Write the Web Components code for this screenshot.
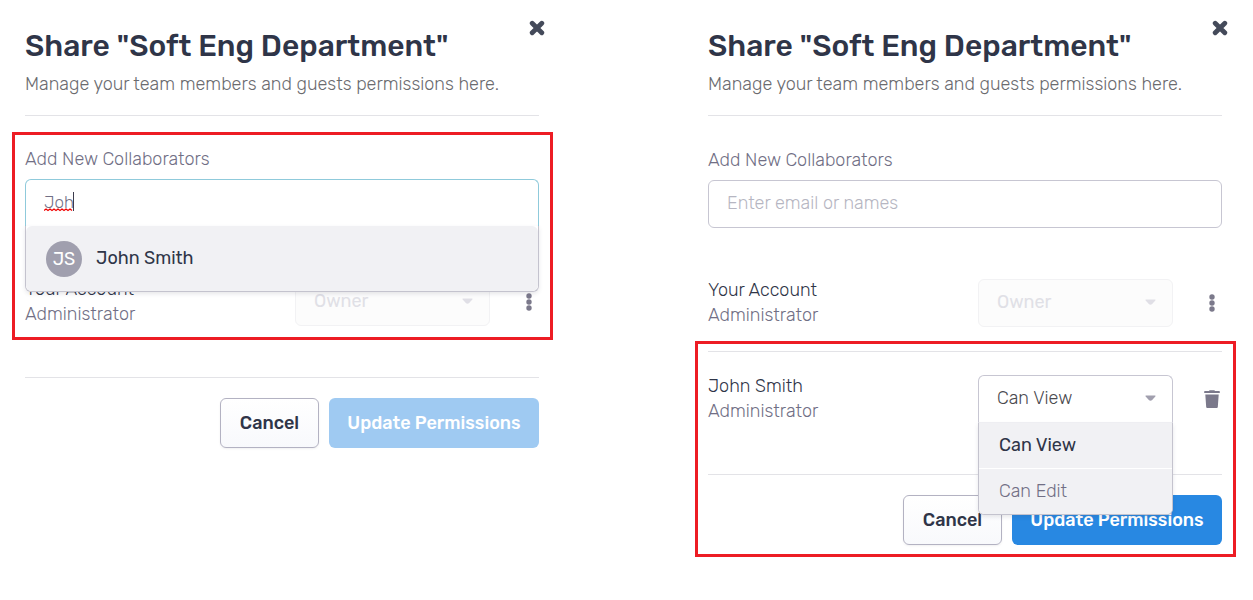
<!DOCTYPE html>
<html lang="en">
<head>
<meta charset="utf-8">
<meta name="viewport" content="width=device-width, initial-scale=1">
<title>Share "Soft Eng Department"</title>
<style>
  body { margin: 0; background: #fff; font-family: Rubik, Roboto, sans-serif; font-size: 18px; font-weight: 365; line-height: 25px; color: #2f3548; }
  main { display: grid; grid-template-columns: minmax(0, 1fr) minmax(0, 1fr); column-gap: 169px; padding: 16px 31px 43px 25px; align-items: start; }
  section { padding: 4px 0 12px; }
</style>
</head>
<body>
<main>
  <share-dialog heading='Share "Soft Eng Department"' pending>
    <highlight-frame>
      <collaborator-field value="Joh" match="John Smith" initials="JS"></collaborator-field>
      <member-row name="Your Account" role-name="Administrator" access="Owner" locked></member-row>
    </highlight-frame>
  </share-dialog>
  <share-dialog heading='Share "Soft Eng Department"'>
    <section>
      <collaborator-field></collaborator-field>
      <member-row name="Your Account" role-name="Administrator" access="Owner" locked></member-row>
    </section>
    <highlight-frame slot="last">
      <member-row name="John Smith" role-name="Administrator" access="Can View" divided open></member-row>
      <dialog-actions></dialog-actions>
    </highlight-frame>
  </share-dialog>
</main>
<script>
const attr = (el, n) => (el.getAttribute(n) || '').replace(/&/g, '&amp;').replace(/"/g, '&quot;').replace(/</g, '&lt;');
const render = (el, html) => { el.attachShadow({ mode: 'open' }).innerHTML = html; };

customElements.define('highlight-frame', class extends HTMLElement {
  connectedCallback() {
    render(this, `
      <style>:host { display: block; margin: 0 -14px 0 -13px; border: 3px solid #ed1c24; padding: 0 11px 9px 10px; }</style>
      <slot></slot>`);
  }
});

customElements.define('share-dialog', class extends HTMLElement {
  connectedCallback() {
    const pending = this.hasAttribute('pending');
    render(this, `
      <style>
        :host { display: block; }
        header { display: grid; grid-template-columns: 1fr auto; padding-bottom: 18px; border-bottom: 1px solid #e3e3e7; margin-bottom: 16px; }
        h2 { margin: 10px 0 0; font-size: 30px; line-height: 40px; font-weight: 500; white-space: nowrap; }
        p { grid-column: 1 / -1; margin: 6px 0 0; color: #6b6b6f; font-weight: 300; }
        button { width: 24px; height: 24px; margin-right: -10px; padding: 0; border: 0; background: none; display: grid; place-items: center; color: #444a5a; }
        dialog-actions { margin-top: 37px; }
      </style>
      <header>
        <h2>${attr(this, 'heading')}</h2>
        <button type="button" aria-label="Close">
          <svg width="16" height="16" viewBox="0 0 16 16"><path d="M3.2 3.2 12.8 12.8M12.8 3.2 3.2 12.8" stroke="currentColor" stroke-width="4.8" stroke-linecap="round"/></svg>
        </button>
        <p>Manage your team members and guests permissions here.</p>
      </header>
      <slot></slot>
      ${pending ? '<dialog-actions disabled></dialog-actions>' : ''}
      <slot name="last"></slot>`);
  }
});

customElements.define('collaborator-field', class extends HTMLElement {
  connectedCallback() {
    const value = attr(this, 'value');
    render(this, `
      <style>
        :host { display: block; position: relative; z-index: 2; padding-top: 12px; }
        label { display: block; color: #716f85; margin-bottom: 7px; }
        .box { position: relative; }
        input { box-sizing: border-box; display: block; width: 100%; height: 48px; padding: 0 18px 2px; border: 1px solid #c7c6d2; border-radius: 6px; background: #fff; color: #716f85; font: inherit; outline: 0; }
        input::placeholder { color: #b6b6c2; opacity: 1; }
        .active { border-color: #8fcadb #8fcadb #fff; border-radius: 6px 6px 0 0; font-size: 17px; }
        .typing { position: absolute; left: 19px; top: 12px; }
        .menu { position: absolute; top: 47px; left: 0; right: 0; border: 1px solid #c4c3ce; border-top: 0; border-radius: 0 0 6px 6px; background: #fff; box-shadow: 0 2px 4px rgba(60, 60, 80, .12); }
        button { width: 100%; height: 65px; display: flex; align-items: center; gap: 14px; padding: 0 20px; border: 0; border-radius: 6px; background: #f1f1f4; color: #2f3548; font: inherit; font-weight: 450; text-align: left; }
        .avatar { width: 36px; height: 36px; line-height: 36px; border-radius: 50%; background: #a09fae; color: #fff; text-align: center; font-weight: 400; }
      </style>
      <label for="people">Add New Collaborators</label>
      <div class="box">
        <input id="people" type="text" placeholder="Enter email or names" value="${value}" class="${value ? 'active' : ''}" spellcheck="false">
        ${value ? `
        <svg class="typing" width="31" height="22" viewBox="0 0 31 22" fill="none" aria-hidden="true">
          <path d="M0 19.5 2 18 4 19.5 6 18 8 19.5 10 18 12 19.5 14 18 16 19.5 18 18 20 19.5 22 18 24 19.5 26 18 28 19.5" stroke="#f00000" stroke-width="1.3"/>
          <path d="M29.5 1V20" stroke="#3c3c4c"/>
        </svg>
        <div class="menu"><button type="button"><span class="avatar">${attr(this, 'initials')}</span><span>${attr(this, 'match')}</span></button></div>` : ''}
      </div>`);
  }
});

customElements.define('access-select', class extends HTMLElement {
  connectedCallback() {
    const locked = this.hasAttribute('locked'), open = this.hasAttribute('open'), v = attr(this, 'value');
    render(this, `
      <style>
        :host { display: block; position: relative; width: 195px; }
        select { appearance: none; box-sizing: border-box; display: block; width: 100%; height: 48px; padding: 0 36px 2px 18px; border: 1px solid #c7c6d2; border-radius: 6px; background: #fff; color: #4a4a4f; font: inherit; font-weight: 300; opacity: 1; }
        select:disabled { background: #fcfcfc; border-color: #f2f2f4; color: #e0e0e6; font-weight: 400; }
        svg { position: absolute; right: 17px; top: 20px; color: #a19fae; }
        select:disabled + svg { color: #e0dfe6; }
        ul { position: absolute; z-index: 3; top: 48px; left: 0; right: 0; margin: 0; padding: 0; list-style: none; border: 1px solid #c4c3ce; border-top: 0; border-radius: 0 0 6px 6px; overflow: hidden; background: #fff; box-shadow: 0 2px 4px rgba(60, 60, 80, .12); }
        .open { border-bottom-color: #f1f1f4; border-radius: 6px 6px 0 0; }
        li + li { border-top: 1px solid #fff; }
        li button { display: block; width: 100%; height: 45px; padding: 0 20px; border: 0; background: #f1f1f4; color: #716f85; font: inherit; text-align: left; }
        li .chosen { color: #2f3548; font-weight: 450; }
      </style>
      <select aria-label="Permission" class="${open ? 'open' : ''}" ${locked ? 'disabled' : ''}><option>${v}</option></select>
      <svg width="11" height="6" viewBox="0 0 11 6" aria-hidden="true"><path d="M1 .5H10Q11 .5 10.300 1.500L7.200 5Q5.500 6.400 3.800 5L.7 1.500Q0 .5 1 .5Z" fill="currentColor"/></svg>
      ${open ? '<ul><li><button type="button" class="chosen">Can View</button></li><li><button type="button">Can Edit</button></li></ul>' : ''}`);
  }
});

customElements.define('member-row', class extends HTMLElement {
  connectedCallback() {
    const locked = this.hasAttribute('locked');
    const flag = n => this.hasAttribute(n) ? n : '';
    render(this, `
      <style>
        :host { display: block; padding-top: 46px; }
        :host([divided]) { padding-top: 7px; }
        .row { display: grid; grid-template-columns: 1fr 195px auto; align-items: center; padding: 4px 0 1px; }
        :host([divided]) .row { border-top: 1px solid #e3e3e7; padding: 22px 0 50px; }
        .who { line-height: 25px; }
        .who div + div { color: #716f85; }
        button { width: 20px; height: 24px; margin-left: 29px; padding: 0; border: 0; background: none; display: grid; place-items: center; color: #7b798b; }
      </style>
      <div class="row">
        <div class="who"><div>${attr(this, 'name')}</div><div>${attr(this, 'role-name')}</div></div>
        <access-select value="${attr(this, 'access')}" ${flag('locked')} ${flag('open')}></access-select>
        ${locked
          ? '<button type="button" aria-label="More"><svg width="6" height="18" viewBox="0 0 6 18" fill="currentColor"><circle cx="3" cy="3" r="2.700"/><circle cx="3" cy="9" r="2.700"/><circle cx="3" cy="15" r="2.700"/></svg></button>'
          : '<button type="button" aria-label="Remove"><svg width="16" height="18" viewBox="0 0 16 18" fill="currentColor"><path d="M.8 1H5L5.600.2H10.400L11 1H15.200Q15.800 1 15.800 1.600V3H.2V1.600Q.2 1 .8 1ZM1.300 4.500H14.700L13.800 17Q13.700 18 12.800 18H3.200Q2.300 18 2.200 17Z"/></svg></button>'}
      </div>`);
  }
});

customElements.define('dialog-actions', class extends HTMLElement {
  connectedCallback() {
    render(this, `
      <style>
        :host { display: flex; justify-content: flex-end; gap: 10px; border-top: 1px solid #e3e3e7; padding-top: 20px; }
        button { box-sizing: border-box; height: 50px; padding: 0; border-radius: 6px; font: inherit; font-weight: 500; white-space: nowrap; }
        .cancel { width: 99px; border: 1px solid #b3b2c2; background: linear-gradient(#fff, #f8f9fc); color: #2f3548; box-shadow: 0 1px 2px rgba(60, 60, 80, .08); }
        .update { width: 210px; border: 0; background: #2888e2; color: #fff; }
        .update:disabled { background: #9fcaf2; }
      </style>
      <button type="button" class="cancel">Cancel</button>
      <button type="button" class="update" ${this.hasAttribute('disabled') ? 'disabled' : ''}>Update Permissions</button>`);
  }
});
</script>
</body>
</html>
